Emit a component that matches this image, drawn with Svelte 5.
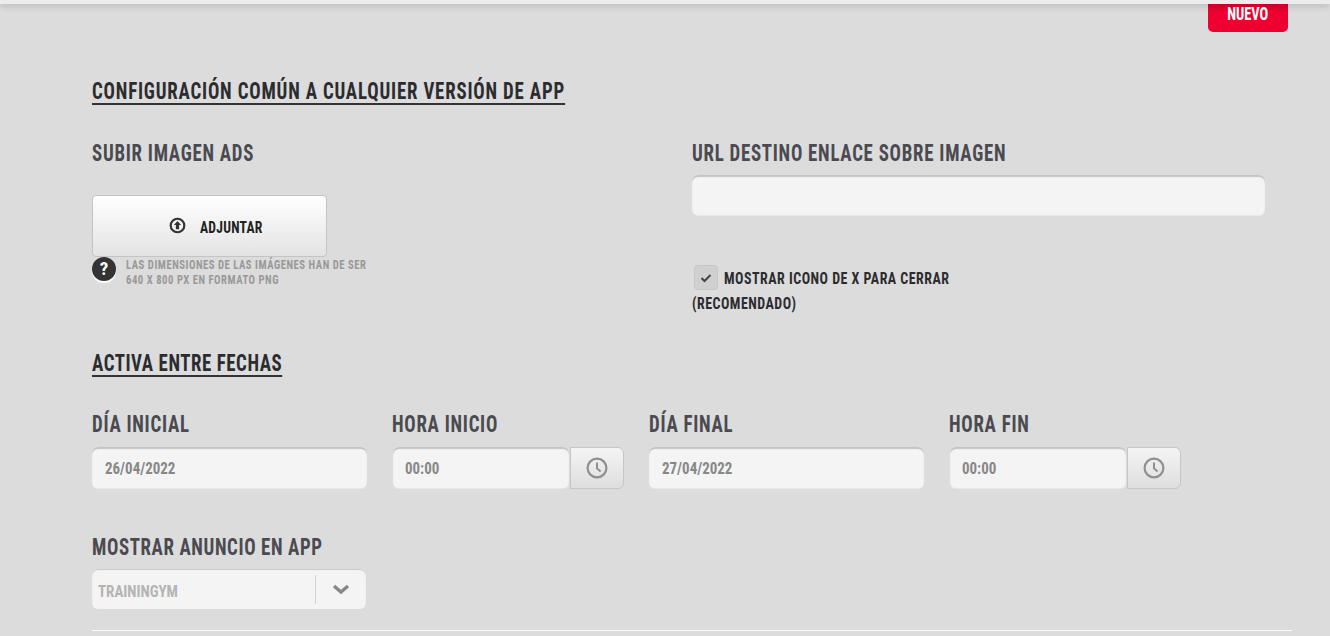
<script lang="ts">
	const fields = [
		{ label: 'DÍA INICIAL', value: '26/04/2022', time: false },
		{ label: 'HORA INICIO', value: '00:00', time: true },
		{ label: 'DÍA FINAL', value: '27/04/2022', time: false },
		{ label: 'HORA FIN', value: '00:00', time: true }
	];
</script>

<div class="topbar"></div>
<div class="badge-row"><span class="badge"><span class="squeeze">NUEVO</span></span></div>

<main class="page">
	<h2 class="section first">CONFIGURACIÓN COMÚN A CUALQUIER VERSIÓN DE APP</h2>

	<div class="columns">
		<div class="col-left">
			<h3>SUBIR IMAGEN ADS</h3>
			<button type="button" class="attach">
				<svg width="17" height="17" viewBox="0 0 16 16">
					<circle cx="8" cy="8" r="6.4" fill="none" stroke="#333" stroke-width="2" />
					<path d="M8 3.8 11.4 7.6H9.5V11.6H6.5V7.6H4.6z" fill="#333" />
				</svg>
				<span class="attach-label">ADJUNTAR</span>
			</button>
			<div class="hint">
				<span class="help">?</span>
				<p>LAS DIMENSIONES DE LAS IMÁGENES HAN DE SER<br />640 X 800 PX EN FORMATO PNG</p>
			</div>
		</div>
		<div class="col-right">
			<h3>URL DESTINO ENLACE SOBRE IMAGEN</h3>
			<div class="input url"></div>
			<div class="check-row">
				<span class="check">
					<svg width="12" height="10" viewBox="0 0 12 10">
						<path d="M1.5 5 4.5 8 10.5 2" fill="none" stroke="#444" stroke-width="2" />
					</svg>
				</span>
				<span class="check-label">MOSTRAR ICONO DE X PARA CERRAR</span>
			</div>
			<div class="check-label second">(RECOMENDADO)</div>
		</div>
	</div>

	<h2 class="section dates-title">ACTIVA ENTRE FECHAS</h2>

	<div class="dates">
		{#each fields as f}
			<div class="field" class:timed={f.time}>
				<h3>{f.label}</h3>
				<div class="group">
					<div class="input value"><span class="squeeze">{f.value}</span></div>
					{#if f.time}
						<span class="clock">
							<svg width="22" height="22" viewBox="0 0 22 22">
								<circle cx="11" cy="11" r="9.4" fill="none" stroke="#909090" stroke-width="2.2" />
								<path d="M11 5.5V11.4L14.6 14.6" fill="none" stroke="#909090" stroke-width="2" />
							</svg>
						</span>
					{/if}
				</div>
			</div>
		{/each}
	</div>

	<div class="show-in">
		<h3>MOSTRAR ANUNCIO EN APP</h3>
		<div class="select">
			<span class="select-value"><span class="squeeze">TRAININGYM</span></span>
			<span class="select-arrow">
				<svg width="18" height="11" viewBox="0 0 18 11">
					<path d="M2 2 9 8 16 2" fill="none" stroke="#888" stroke-width="3.4" />
				</svg>
			</span>
		</div>
	</div>

	<hr />
</main>

<style>
	:global(body) {
		margin: 0;
		background: #dcdcdc;
		font-family: Roboto, 'Liberation Sans', sans-serif;
		font-stretch: 75%;
		overflow: hidden;
	}
	.topbar {
		position: relative;
		height: 4px;
		background: #ececec;
		box-shadow: 0 2px 6px rgba(0, 0, 0, 0.2);
	}
	.badge-row {
		display: flex;
		justify-content: flex-end;
		padding-right: 42px;
		height: 28px;
	}
	.badge {
		width: 80px;
		height: 28px;
		background: linear-gradient(#d8002c, #ee0030 25%);
		border-radius: 0 0 5px 5px;
		color: #fff;
		font-size: 18px;
		font-weight: 700;
		text-align: center;
		line-height: 20px;
	}
	.squeeze {
		display: inline-block;
		transform: scaleX(0.88);
		transform-origin: left;
	}
	.badge .squeeze {
		transform: scaleX(0.8);
		transform-origin: center;
	}
	.page {
		padding: 0 65px 0 92px;
	}
	h2,
	h3,
	p {
		margin: 0;
	}
	.section {
		width: max-content;
		color: #2c2c30;
		font-size: 23px;
		font-weight: 700;
		line-height: 22px;
		letter-spacing: 1px;
		border-bottom: 2px solid #333;
		transform: scaleX(0.82);
		transform-origin: left;
	}
	.first {
		margin-top: 49px;
	}
	h3 {
		width: max-content;
		color: #4a4a50;
		font-size: 23px;
		font-weight: 700;
		line-height: 26px;
		letter-spacing: 0.9px;
		transform: scaleX(0.82);
		transform-origin: left;
	}
	.columns {
		display: flex;
		margin-top: 36px;
	}
	.col-left {
		width: 600px;
	}
	.col-right {
		flex: 1;
	}
	.attach {
		display: flex;
		align-items: center;
		gap: 14px;
		box-sizing: border-box;
		width: 235px;
		height: 62px;
		margin-top: 28px;
		padding: 0 0 2px 76px;
		background: linear-gradient(#fff, #e3e3e3);
		border: 1px solid #c4c4c4;
		border-radius: 4px;
		font: inherit;
	}
	.attach-label {
		padding-top: 4px;
		color: #222;
		font-size: 17px;
		font-weight: 700;
		letter-spacing: 0.3px;
		transform: scaleX(0.8);
		transform-origin: left;
	}
	.hint {
		display: flex;
		gap: 10px;
	}
	.help {
		width: 24px;
		height: 24px;
		border-radius: 50%;
		background: #333;
		box-shadow: 0 2px 1px #fff;
		color: #fff;
		font-size: 19px;
		font-weight: 700;
		line-height: 24px;
		text-align: center;
		flex: none;
	}
	.hint p {
		width: max-content;
		color: #999;
		font-size: 13px;
		font-weight: 700;
		line-height: 15px;
		letter-spacing: 0.64px;
		transform: scaleX(0.82);
		transform-origin: left;
	}
	.input {
		box-sizing: border-box;
		background: #f4f4f4;
		border-radius: 6px;
		box-shadow:
			inset 0 2px 1px #c4c4c4,
			0 1px 1px rgba(255, 255, 255, 0.4);
	}
	.url {
		height: 40px;
		margin-top: 8px;
	}
	.check-row {
		display: flex;
		align-items: flex-start;
		gap: 6px;
		margin-top: 50px;
		padding-left: 2px;
	}
	.check {
		display: flex;
		align-items: center;
		justify-content: center;
		width: 24px;
		height: 25px;
		background: #d0d0d0;
		border: 1px solid #c6c6c6;
		border-radius: 4px;
		box-sizing: border-box;
	}
	.check-label {
		width: max-content;
		color: #2c2c30;
		font-size: 17px;
		font-weight: 700;
		line-height: 26px;
		letter-spacing: 0.6px;
		transform: scaleX(0.82);
		transform-origin: left;
	}
	.second {
		margin-top: -1px;
	}
	.dates-title {
		margin-top: 37px;
		letter-spacing: 0.68px;
	}
	.dates {
		display: flex;
		margin-top: 35px;
	}
	.field {
		width: 300px;
		flex: none;
	}
	.field.timed {
		width: 257px;
	}
	.field .group {
		display: flex;
		margin-top: 9px;
	}
	.field .value {
		width: 275px;
		height: 41px;
		padding: 0 13px;
		color: #888;
		font-size: 17px;
		font-weight: 700;
		line-height: 43px;
	}
	.field.timed .value {
		width: 176px;
		margin-left: 1px;
		padding: 0 12px;
	}
	.clock {
		display: flex;
		align-items: center;
		justify-content: center;
		box-sizing: border-box;
		width: 54px;
		height: 42px;
		margin-left: 1px;
		background: linear-gradient(#f4f4f4, #dedede);
		border: 1px solid #c6c6c6;
		border-radius: 0 6px 6px 0;
	}
	.show-in {
		margin-top: 46px;
	}
	.show-in h3 {
		letter-spacing: 0.75px;
	}
	.select {
		display: flex;
		align-items: center;
		width: 274px;
		height: 40px;
		margin-top: 8px;
		background: #f4f4f4;
		border-radius: 6px;
		box-shadow: inset 0 1px 1px #c8c8c8;
	}
	.select-value {
		flex: 1;
		padding: 3px 0 0 6px;
		color: #b4b4b4;
		font-size: 17px;
		font-weight: 700;
	}
	.select-arrow {
		display: flex;
		align-items: center;
		justify-content: center;
		width: 50px;
		height: 29px;
		border-left: 1px solid #d2d2d2;
	}
	hr {
		height: 1px;
		margin: 21px -27px 0 0;
		background: #fafafa;
		border: 0;
	}
</style>
